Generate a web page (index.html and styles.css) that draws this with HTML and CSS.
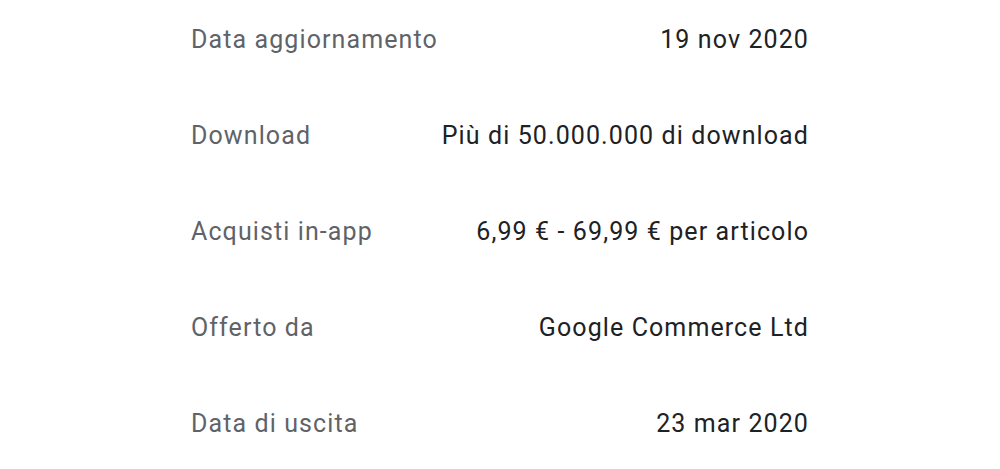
FILE: index.html
```html
<!DOCTYPE html>
<html lang="it">
<head>
<meta charset="utf-8">
<link rel="stylesheet" href="styles.css">
</head>
<body>
<div class="details">
  <div class="row"><div class="label">Data aggiornamento</div><div class="value">19 nov 2020</div></div>
  <div class="row"><div class="label">Download</div><div class="value">Più di 50.000.000 di download</div></div>
  <div class="row"><div class="label">Acquisti in-app</div><div class="value">6,99 € - 69,99 € per articolo</div></div>
  <div class="row"><div class="label">Offerto da</div><div class="value">Google Commerce Ltd</div></div>
  <div class="row"><div class="label">Data di uscita</div><div class="value">23 mar 2020</div></div>
</div>
</body>
</html>
```
FILE: styles.css
```css
html, body {
  margin: 0;
  padding: 0;
  background: #ffffff;
}
body {
  font-family: Roboto, "Noto Sans", Arial, sans-serif;
  font-size: 25px;
  line-height: 32px;
  letter-spacing: 1.1px;
}
.details {
  width: 618px;
  margin-left: 191px;
  padding-top: 24px;
  display: flex;
  flex-direction: column;
  gap: 64px;
}
.row {
  display: flex;
  justify-content: space-between;
  align-items: center;
}
.label {
  color: #5f6368;
}
.value {
  color: #202124;
}
```
